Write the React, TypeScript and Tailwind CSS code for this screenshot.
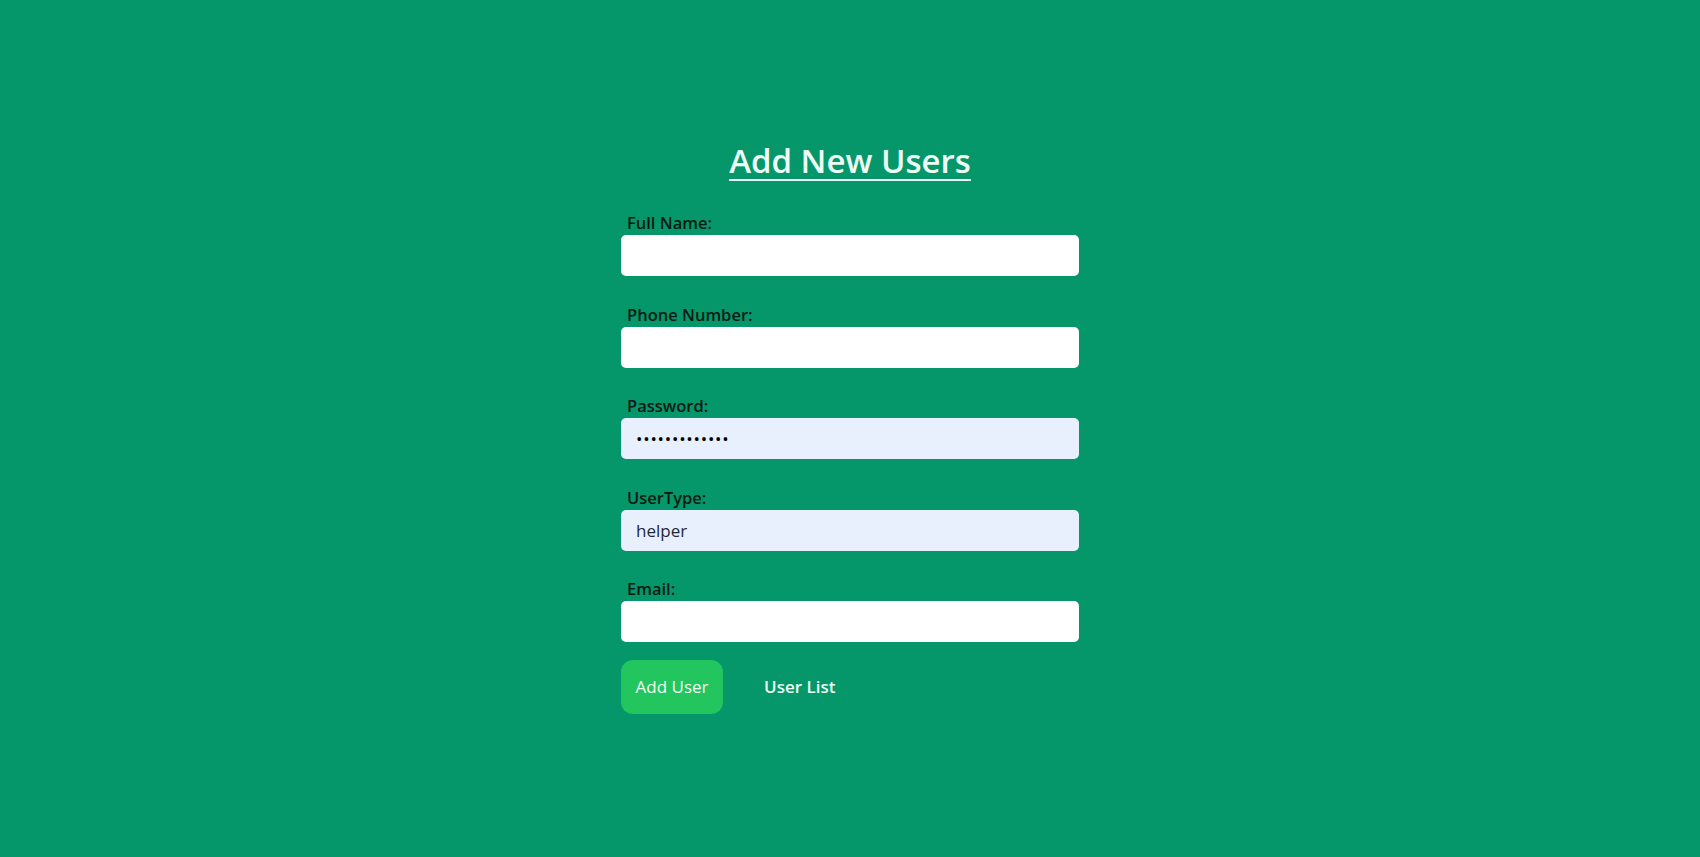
import { useState } from "react";

export default function App() {
  const [form, setForm] = useState({
    name: "",
    phone: "",
    password: "helper1234567",
    userType: "helper",
    email: "",
  });

  const update = (key: keyof typeof form) => (e: React.ChangeEvent<HTMLInputElement>) =>
    setForm({ ...form, [key]: e.target.value });

  return (
    <div
      className="min-h-screen bg-[#059669] flex items-center justify-center"
      style={{ fontFamily: '"Open Sans", "Noto Sans", sans-serif' }}
    >
      <form className="w-[458px] flex flex-col" onSubmit={(e) => e.preventDefault()}>
        <h1 className="text-center text-[33px] leading-10 font-semibold text-[#ecfdf5] underline underline-offset-[6px] decoration-2 -translate-y-[2px]">
          Add New Users
        </h1>

        <div className="mt-[28px] flex flex-col gap-[26.5px]">
          <Field label="Full Name:" value={form.name} onChange={update("name")} />
          <Field label="Phone Number:" value={form.phone} onChange={update("phone")} />
          <Field
            label="Password:"
            type="password"
            autofill
            value={form.password}
            onChange={update("password")}
          />
          <Field label="UserType:" autofill value={form.userType} onChange={update("userType")} />
          <Field label="Email:" type="email" value={form.email} onChange={update("email")} />
        </div>

        <div className="mt-[18px] flex items-center">
          <button
            type="submit"
            className="h-[54px] w-[102px] flex items-center justify-center rounded-xl bg-[#22c55e] text-[#f0fdf4] text-[17px] font-medium"
          >
            Add User
          </button>
          <a href="#" className="ml-[41px] text-[#ecfdf5] text-[17px] font-semibold">
            User List
          </a>
        </div>
      </form>
    </div>
  );
}

function Field({
  label,
  value,
  onChange,
  type = "text",
  autofill = false,
}: {
  label: string;
  value: string;
  onChange: (e: React.ChangeEvent<HTMLInputElement>) => void;
  type?: string;
  autofill?: boolean;
}) {
  return (
    <label className="flex flex-col">
      <span className="pl-[6px] text-[16.5px] leading-6 font-semibold text-[#0b1a12]">{label}</span>
      <input
        type={type}
        value={value}
        onChange={onChange}
        className={`h-[41px] rounded-[5px] px-[15px] text-[17px] text-[#1f2937] outline-none ${
          autofill ? "bg-[#e8f0fe]" : "bg-white"
        } ${type === "password" ? "tracking-[0.8px] text-black" : ""}`}
      />
    </label>
  );
}
